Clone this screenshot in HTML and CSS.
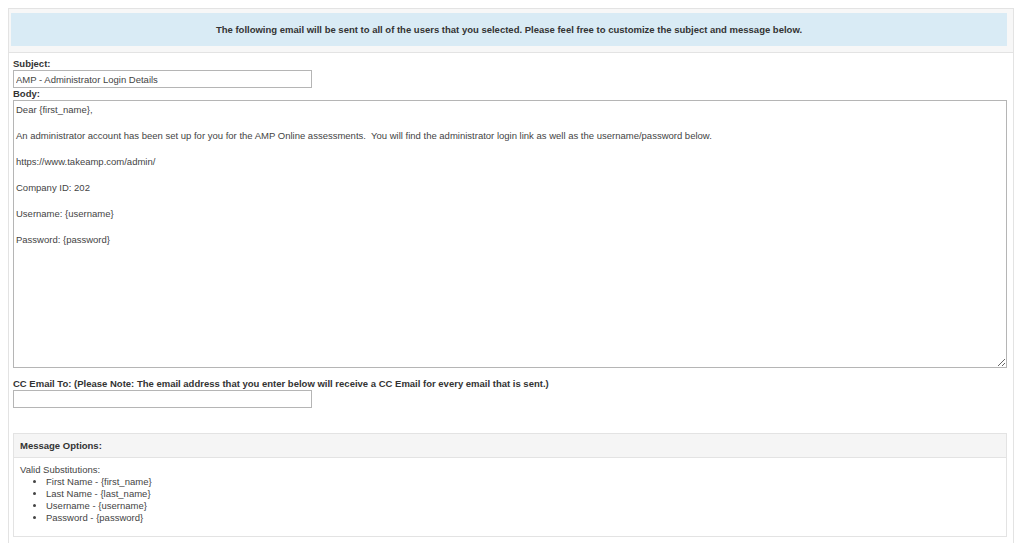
FILE: index.html
```html
<!DOCTYPE html>
<html>
<head>
<meta charset="utf-8">
<link rel="stylesheet" href="styles.css">
</head>
<body>
<div class="panel">
  <div class="panel-head">
    <div class="alert">The following email will be sent to all of the users that you selected. Please feel free to customize the subject and message below.</div>
  </div>
  <div class="panel-body">
    <label class="label">Subject:</label>
    <input class="field" type="text" value="AMP - Administrator Login Details">
    <label class="label body-label">Body:</label>
    <textarea class="body-text">Dear {first_name},

An administrator account has been set up for you for the AMP Online assessments.  You will find the administrator login link as well as the username/password below.

https://www.takeamp.com/admin/

Company ID: 202

Username: {username}

Password: {password}</textarea>
    <label class="label cc-label">CC Email To: (Please Note: The email address that you enter below will receive a CC Email for every email that is sent.)</label>
    <input class="field" type="text" value="">
    <div class="options">
      <div class="options-head">Message Options:</div>
      <div class="options-body">
        <div>Valid Substitutions:</div>
        <ul class="subs">
          <li>First Name - {first_name}</li>
          <li>Last Name - {last_name}</li>
          <li>Username - {username}</li>
          <li>Password - {password}</li>
        </ul>
      </div>
    </div>
  </div>
</div>
</body>
</html>
```

FILE: styles.css
```css
html, body {
  background: #ffffff;
}
body {
  margin: 8px 10px 0 8px;
  font-family: "Liberation Sans", Arial, sans-serif;
  font-size: 9.5px;
  color: #333333;
  overflow: hidden;
}
.panel {
  border: 1px solid #e3e3e3;
  border-bottom: none;
  padding-bottom: 6px;
}
.panel-head {
  background: #f7f7f7;
  padding: 4px 6px 6px 2px;
  border-bottom: 1px solid #e3e3e3;
}
.alert {
  background: #d9ebf5;
  height: 33px;
  display: flex;
  align-items: center;
  justify-content: center;
  font-weight: bold;
  color: #333333;
}
.panel-body {
  padding: 4px 6px 0 4px;
  display: flex;
  flex-direction: column;
  align-items: flex-start;
}
.label {
  display: block;
  font-weight: bold;
  line-height: 13px;
  color: #333333;
}
.body-label {
  line-height: 12px;
}
.field {
  width: 299px;
  height: 18px;
  box-sizing: border-box;
  border: 1px solid #b5b5b5;
  padding: 0 2px;
  font-family: "Liberation Sans", Arial, sans-serif;
  font-size: 9.5px;
  color: #444444;
  margin: 0;
  outline: none;
}
.body-text {
  width: 100%;
  height: 268px;
  box-sizing: border-box;
  border: 1px solid #b5b5b5;
  padding: 2px 2px;
  margin: 0;
  font-family: "Liberation Sans", Arial, sans-serif;
  font-size: 9.5px;
  line-height: 13px;
  color: #444444;
  resize: both;
  outline: none;
}
.cc-label {
  margin-top: 9px;
}
.options {
  margin-top: 25px;
  width: 100%;
  border: 1px solid #e3e3e3;
  box-sizing: border-box;
}
.options-head {
  background: #f5f5f5;
  border-bottom: 1px solid #e3e3e3;
  height: 23px;
  display: flex;
  align-items: center;
  padding-left: 6px;
  font-weight: bold;
  color: #333333;
}
.options-body {
  padding: 5px 6px 12px 6px;
  line-height: 13px;
  color: #444444;
}
.subs {
  margin: 0;
  padding-left: 26px;
  line-height: 12px;
}
```
